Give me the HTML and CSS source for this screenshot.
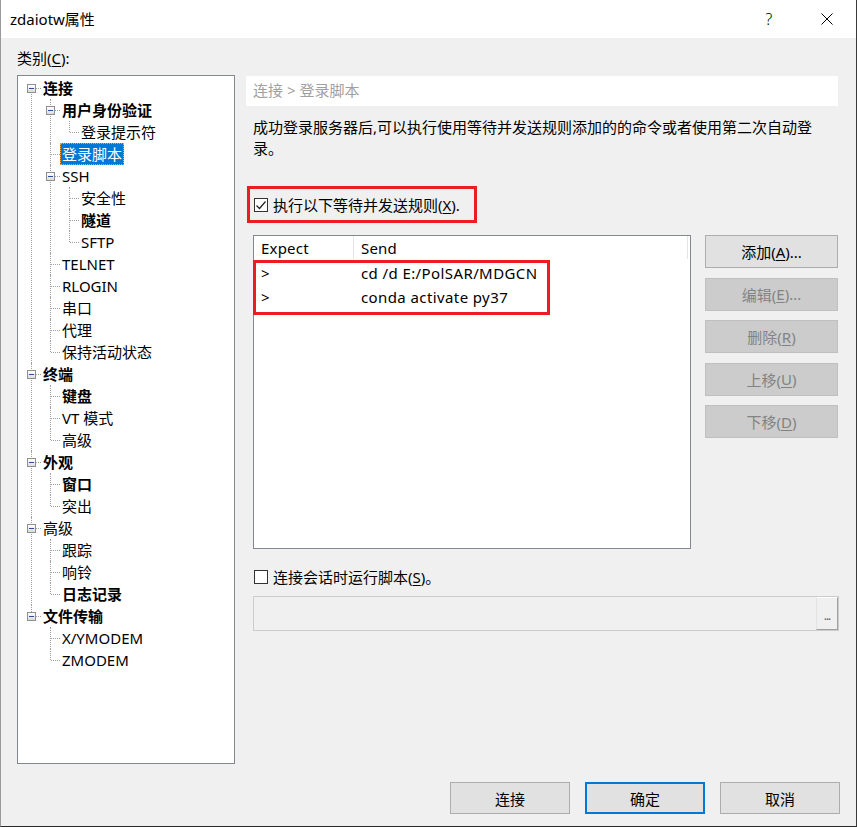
FILE: index.html
```html
<!DOCTYPE html>
<html>
<head>
<meta charset="utf-8">
<link rel="stylesheet" href="styles.css">
</head>
<body>
<div class="window">
  <div class="titlebar">
    <span class="title">zdaiotw属性</span>
    <span class="tb-help">?</span>
    <span class="tb-close"><svg width="12" height="12" viewBox="0 0 12 12"><path d="M0.5 0.5L11.5 11.5M11.5 0.5L0.5 11.5" stroke="#000" stroke-width="1" fill="none"/></svg></span>
  </div>
  <div class="client">
    <div class="cat-label">类别(<u>C</u>):</div>
    <div class="main">
      <div class="treebox">
        <ul class="tree">
          <li>
            <div class="row"><span class="exp"></span><span class="lbl b">连接</span></div>
            <ul>
              <li>
                <div class="row"><span class="exp"></span><span class="lbl b">用户身份验证</span></div>
                <ul>
                  <li><div class="row"><span class="lbl">登录提示符</span></div></li>
                </ul>
              </li>
              <li><div class="row"><span class="lbl sel">登录脚本</span></div></li>
              <li>
                <div class="row"><span class="exp"></span><span class="lbl">SSH</span></div>
                <ul>
                  <li><div class="row"><span class="lbl">安全性</span></div></li>
                  <li><div class="row"><span class="lbl b">隧道</span></div></li>
                  <li><div class="row"><span class="lbl">SFTP</span></div></li>
                </ul>
              </li>
              <li><div class="row"><span class="lbl">TELNET</span></div></li>
              <li><div class="row"><span class="lbl">RLOGIN</span></div></li>
              <li><div class="row"><span class="lbl">串口</span></div></li>
              <li><div class="row"><span class="lbl">代理</span></div></li>
              <li><div class="row"><span class="lbl">保持活动状态</span></div></li>
            </ul>
          </li>
          <li>
            <div class="row"><span class="exp"></span><span class="lbl b">终端</span></div>
            <ul>
              <li><div class="row"><span class="lbl b">键盘</span></div></li>
              <li><div class="row"><span class="lbl">VT 模式</span></div></li>
              <li><div class="row"><span class="lbl">高级</span></div></li>
            </ul>
          </li>
          <li>
            <div class="row"><span class="exp"></span><span class="lbl b">外观</span></div>
            <ul>
              <li><div class="row"><span class="lbl b">窗口</span></div></li>
              <li><div class="row"><span class="lbl">突出</span></div></li>
            </ul>
          </li>
          <li>
            <div class="row"><span class="exp"></span><span class="lbl">高级</span></div>
            <ul>
              <li><div class="row"><span class="lbl">跟踪</span></div></li>
              <li><div class="row"><span class="lbl">响铃</span></div></li>
              <li><div class="row"><span class="lbl b">日志记录</span></div></li>
            </ul>
          </li>
          <li>
            <div class="row"><span class="exp"></span><span class="lbl b">文件传输</span></div>
            <ul>
              <li><div class="row"><span class="lbl">X/YMODEM</span></div></li>
              <li><div class="row"><span class="lbl">ZMODEM</span></div></li>
            </ul>
          </li>
        </ul>
      </div>
      <div class="panel">
        <div class="crumb">连接 &gt; 登录脚本</div>
        <div class="desc">成功登录服务器后,可以执行使用等待并发送规则添加的的命令或者使用第二次自动登录。</div>
        <div class="redbox1">
          <span class="chk checked"><svg width="12" height="12" viewBox="0 0 12 12"><path d="M1.5 6.5L4.5 9.5L10.5 2.5" stroke="#222" stroke-width="1.2" fill="none"/></svg></span>
          <span class="chk-label">执行以下等待并发送规则(<u>X</u>).</span>
        </div>
        <div class="listarea">
          <div class="list">
            <div class="lhead">
              <div class="col c1">Expect</div>
              <div class="col c2">Send</div>
            </div>
            <div class="lrow"><div class="col c1">&gt;</div><div class="col c2">cd /d E:/PolSAR/MDGCN</div></div>
            <div class="lrow"><div class="col c1">&gt;</div><div class="col c2">conda activate py37</div></div>
            <div class="redbox2"></div>
          </div>
          <div class="sidebtns">
            <div class="btn">添加(<u>A</u>)...</div>
            <div class="btn disabled">编辑(<u>E</u>)...</div>
            <div class="btn disabled">删除(<u>R</u>)</div>
            <div class="btn disabled">上移(<u>U</u>)</div>
            <div class="btn disabled">下移(<u>D</u>)</div>
          </div>
        </div>
        <div class="chkrow">
          <span class="chk"></span>
          <span class="chk-label">连接会话时运行脚本(<u>S</u>)。</span>
        </div>
        <div class="field">
          <div class="field-btn">...</div>
        </div>
      </div>
    </div>
    <div class="footer">
      <div class="btn fbtn">连接</div>
      <div class="btn fbtn default">确定</div>
      <div class="btn fbtn">取消</div>
    </div>
  </div>
</div>
</body>
</html>
```

FILE: styles.css
```css
* { box-sizing: border-box; }
html, body { margin: 0; padding: 0; background: #ffffff; }
body {
  font-family: "Noto Sans", "Noto Sans CJK SC", sans-serif;
  font-size: 15px;
  color: #000;
}
u { text-decoration: underline; text-underline-offset: 2px; }

.window {
  width: 857px;
  height: 827px;
  border-left: 1px solid #9a9a9a;
  border-right: 1px solid #3a3a3a;
  border-bottom: 1px solid #2a2a2a;
  display: flex;
  flex-direction: column;
  overflow: hidden;
}

.titlebar {
  height: 38px;
  flex: none;
  background: #fff;
  display: flex;
  align-items: center;
  padding-left: 9px;
}
.title { flex: 1; line-height: 20px; }
.tb-help { width: 20px; text-align: center; margin-right: 42px; font-size: 16px; font-weight: 300; }
.tb-close { width: 12px; height: 12px; margin-right: 23px; display: flex; }

.client {
  flex: 1;
  background: #f0f0f0;
  padding: 10px 0 0 16px;
  display: flex;
  flex-direction: column;
}
.cat-label { height: 20px; line-height: 20px; }

.main { display: flex; margin-top: 7px; }

.treebox {
  width: 218px;
  height: 689px;
  background: #fff;
  border: 1px solid #828790;
  padding-top: 1px;
  flex: none;
}
.tree, .tree ul { list-style: none; margin: 0; padding: 0; }
.tree ul { margin-left: 19px; }
.tree li { position: relative; }
.tree li::before {
  content: "";
  position: absolute;
  left: 13px;
  top: 0;
  bottom: 0;
  border-left: 1px dotted #a0a0a0;
}
.tree > li:first-child::before { top: 11px; }
.tree li:last-child::before { bottom: auto; height: 11px; }
.tree > li:first-child:last-child::before { height: 0; }

.row {
  position: relative;
  height: 22px;
  display: flex;
  align-items: center;
  padding-left: 25px;
}
.row::before {
  content: "";
  position: absolute;
  left: 14px;
  top: 11px;
  width: 9px;
  border-top: 1px dotted #a0a0a0;
}
.exp {
  position: absolute;
  left: 9px;
  top: 7px;
  width: 9px;
  height: 9px;
  border: 1px solid #8e8f8f;
  background: linear-gradient(#ffffff, #dcdcdc);
  z-index: 1;
}
.exp::after {
  content: "";
  position: absolute;
  left: 1px;
  top: 3px;
  width: 5px;
  height: 1px;
  background: #2b4ea0;
}
.lbl { line-height: 22px; white-space: nowrap; }
.lbl.b { font-weight: 700; }
.lbl.sel {
  background: #0078d7;
  color: #fff;
  height: 22px;
  line-height: 20px;
  padding: 0 1px;
  margin-left: -2px;
  border: 1px dotted #f3a64a;
}

.panel {
  width: 592px;
  margin-left: 11px;
  padding-top: 1px;
  flex: none;
}
.crumb {
  height: 30px;
  background: #fff;
  color: #a0a0a0;
  line-height: 29px;
  padding-left: 7px;
}
.desc {
  margin-top: 11px;
  padding-left: 7px;
  width: 573px;
  line-height: 21px;
}
.redbox1 {
  margin-top: 27px;
  margin-left: 1px;
  width: 230px;
  height: 37px;
  border: 3px solid #ed1c24;
  display: flex;
  align-items: center;
  padding-left: 4px;
}
.chk {
  width: 14px;
  height: 14px;
  border: 1px solid #333;
  background: #fff;
  display: inline-flex;
  align-items: center;
  justify-content: center;
  flex: none;
}
.chk-label { margin-left: 5px; line-height: 20px; white-space: nowrap; }

.listarea { display: flex; margin-top: 12px; align-items: flex-start; }
.list {
  position: relative;
  margin-left: 7px;
  width: 439px;
  height: 314px;
  background: #fff;
  border: 1px solid #828790;
}
.lhead { display: flex; height: 25px; }
.lhead .c1 { border-right: 1px solid #e5e5e5; height: 23px; line-height: 24px; }
.lhead .c2 { flex: 1; border-right: 1px solid #e5e5e5; height: 23px; line-height: 24px; margin-right: 2px; }
.col { padding-left: 7px; white-space: nowrap; letter-spacing: 0.2px; }
.c1 { width: 100px; }
.lrow { display: flex; height: 24px; line-height: 24px; }
.lrow .c2 { padding-left: 7px; letter-spacing: 0.4px; }
.redbox2 {
  position: absolute;
  left: -1px;
  top: 24px;
  width: 297px;
  height: 55px;
  border: 3px solid #ed1c24;
}

.sidebtns {
  margin-left: 14px;
  display: flex;
  flex-direction: column;
  gap: 9.5px;
}
.btn {
  width: 133px;
  height: 33px;
  background: #e1e1e1;
  border: 1px solid #adadad;
  display: flex;
  align-items: center;
  justify-content: center;
  white-space: nowrap;
}
.btn.disabled {
  background: #cccccc;
  border-color: #bfbfbf;
  color: #838383;
}

.chkrow {
  margin-top: 17px;
  margin-left: 8px;
  height: 21px;
  display: flex;
  align-items: center;
}
.field {
  margin-top: 9px;
  margin-left: 7px;
  width: 586px;
  height: 35px;
  border: 1px solid #cccccc;
  background: #f0f0f0;
  display: flex;
  justify-content: flex-end;
}
.field-btn {
  width: 22px;
  height: 33px;
  border-left: 1px solid #e3e3e3;
  border-top: 1px solid #ffffff;
  border-right: 1px solid #a0a0a0;
  border-bottom: 1px solid #a0a0a0;
  background: #f0f0f0;
  font-size: 12px;
  color: #606060;
  text-align: center;
  line-height: 36px;
  letter-spacing: -1px;
}

.footer {
  display: flex;
  justify-content: flex-end;
  gap: 15px;
  margin-top: 18px;
  padding-right: 16px;
}
.fbtn { width: 120px; height: 32px; }
.fbtn.default { border: 2px solid #0078d7; }
```
